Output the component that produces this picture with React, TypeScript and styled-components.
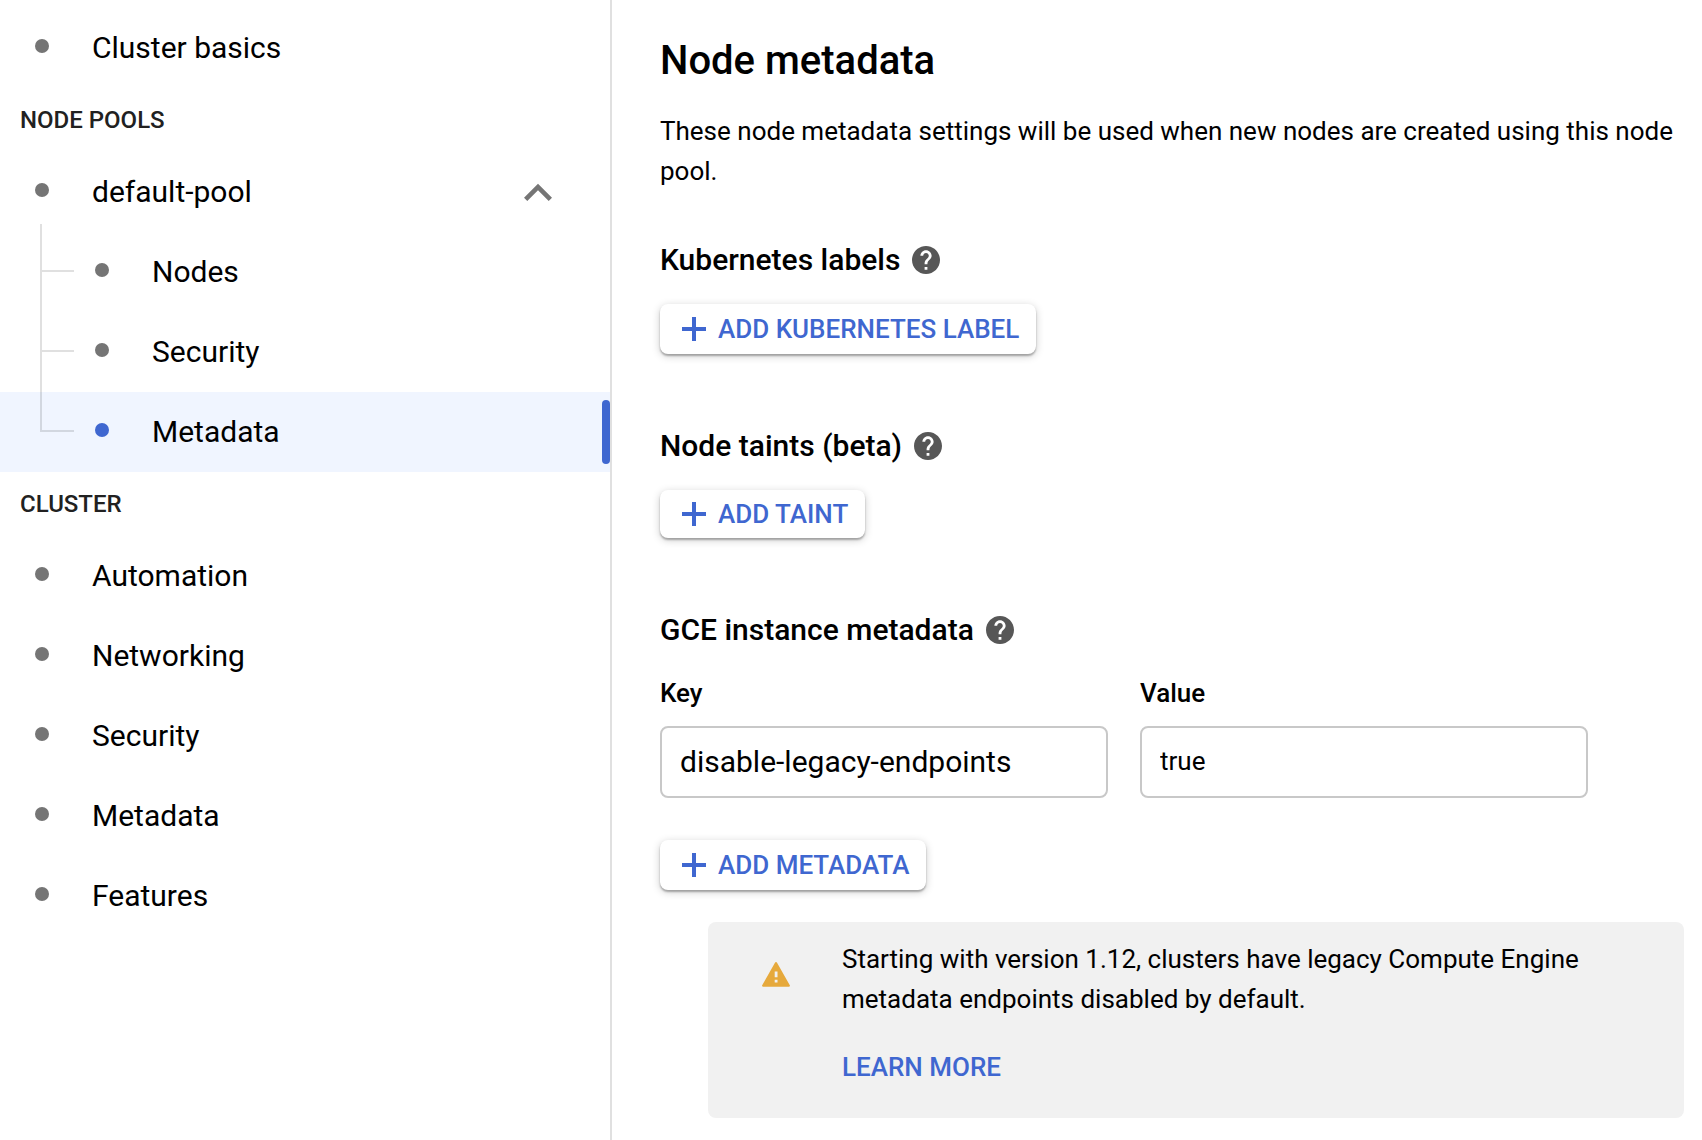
import React from "react";
import styled, { createGlobalStyle } from "styled-components";

const blue = "#3f67d0";

const GlobalStyle = createGlobalStyle`
  *, *::before, *::after { box-sizing: border-box; }
  body {
    margin: 0;
    background: #fff;
    color: #000;
    font-family: Roboto, "Liberation Sans", sans-serif;
    font-size: 26px;
    line-height: 40px;
  }
  h1, h2, h3, p, ul { margin: 0; padding: 0; }
  ul { list-style: none; }
`;

const Page = styled.div`
  display: flex;
  min-height: 100vh;
`;

const Sidebar = styled.nav`
  flex: 0 0 612px;
  padding-top: 8px;
  border-right: 2px solid #e0e0e0;
`;

const GroupTitle = styled.h3`
  padding: 12px 20px;
  color: #212121;
  font-size: 24px;
  font-weight: 500;
`;

const NavLink = styled.a<{ $nested?: boolean; $active?: boolean }>`
  position: relative;
  display: flex;
  align-items: center;
  gap: 43px;
  height: 80px;
  padding: 0 16px 0 ${(p) => (p.$nested ? 95 : 35)}px;
  background: ${(p) => (p.$active ? "#f0f5ff" : "transparent")};
  color: #000;
  font-size: 30px;
  text-decoration: none;

  &::after {
    content: "";
    display: ${(p) => (p.$active ? "block" : "none")};
    position: absolute;
    top: 8px;
    right: 0;
    bottom: 8px;
    width: 8px;
    border-radius: 4px;
    background: ${blue};
  }
`;

const Bullet = styled.span<{ $active?: boolean }>`
  width: 14px;
  height: 14px;
  margin-bottom: 4px;
  border-radius: 50%;
  background: ${(p) => (p.$active ? blue : "#757575")};
`;

const PoolRow = styled.div`
  display: flex;
  align-items: center;

  ${NavLink} { flex: 1; }
`;

const Toggle = styled.button`
  display: flex;
  margin-right: 44px;
  padding: 2px 0 0;
  border: 0;
  background: none;
  color: #757575;
  cursor: pointer;
`;

/* Each branch draws its own piece of the tree line beside the bullet. */
const Branch = styled.li`
  position: relative;

  &::before {
    content: "";
    position: absolute;
    z-index: 1;
    top: -40px;
    left: 40px;
    width: 34px;
    height: 80px;
    border: solid rgba(0, 0, 0, 0.12);
    border-width: 0 0 2px 2px;
  }

  &:first-child::before {
    top: -8px;
    height: 48px;
  }
`;

const Main = styled.main`
  flex: 1;
  min-width: 0;
  padding: 37px 18px 22px 48px;
`;

const Title = styled.h1`
  margin-bottom: 26px;
  font-size: 40px;
  font-weight: 500;
  line-height: 48px;
`;

const Section = styled.section`
  display: flex;
  flex-direction: column;
  align-items: flex-start;
  margin-top: 48px;

  &:first-of-type { margin-top: 49px; }
`;

const SectionTitle = styled.h2`
  display: flex;
  align-items: center;
  gap: 12px;
  font-size: 30px;
  font-weight: 500;
`;

const HelpButton = styled.button`
  display: flex;
  padding: 0;
  border: 0;
  background: none;
  color: #575757;
  cursor: pointer;
`;

const AddButton = styled.button<{ $compact?: boolean }>`
  display: flex;
  align-items: center;
  gap: 12px;
  height: ${(p) => (p.$compact ? 48 : 50)}px;
  margin: 24px 0;
  padding: 0 17px 0 22px;
  border: 0;
  border-radius: 8px;
  background: #fff;
  box-shadow: 0 2px 2px rgba(0, 0, 0, 0.28), 0 2px 8px rgba(0, 0, 0, 0.2);
  color: ${blue};
  font: 500 26px/40px Roboto, "Liberation Sans", sans-serif;
  cursor: pointer;
`;

const Fields = styled.div`
  display: flex;
  gap: 32px;
  width: 100%;
  margin: 23px 0 18px;
`;

const Field = styled.label`
  display: flex;
  flex: 0 1 448px;
  flex-direction: column;
  gap: 13px;
  min-width: 0;
  font-weight: 500;
`;

const TextInput = styled.input<{ $large?: boolean }>`
  width: 100%;
  height: 72px;
  padding: 0 18px 2px;
  border: 2px solid #c8c8c8;
  border-radius: 8px;
  background: #fff;
  color: #000;
  font: 400 ${(p) => (p.$large ? 30 : 26)}px/40px Roboto, "Liberation Sans", sans-serif;
`;

const Notice = styled.aside`
  display: flex;
  align-items: flex-start;
  gap: 52px;
  margin: 8px 0 0 48px;
  padding: 17px 16px 31px 54px;
  border-radius: 8px;
  background: #f1f1f1;

  > svg { flex: none; margin-top: 23px; }
`;

const NoticeBody = styled.div`
  display: flex;
  flex-direction: column;
  align-items: flex-start;
  gap: 28px;
`;

const LearnMore = styled.a`
  color: ${blue};
  font-weight: 500;
  text-decoration: none;
`;

const PlusIcon = () => (
  <svg width="24" height="24" viewBox="0 0 24 24" aria-hidden="true">
    <path d="M10 0h4v10h10v4H14v10h-4V14H0v-4h10z" fill="currentColor" />
  </svg>
);

const HelpIcon = () => (
  <svg width="28" height="28" viewBox="2 2 20 20" aria-hidden="true">
    <path
      fill="currentColor"
      d="M12 2C6.48 2 2 6.48 2 12s4.48 10 10 10 10-4.48 10-10S17.52 2 12 2zm1 17h-2v-2h2v2zm2.07-7.75l-.9.92C13.45 12.9 13 13.5 13 15h-2v-.5c0-1.1.45-2.1 1.17-2.83l1.24-1.26c.37-.36.59-.86.59-1.41 0-1.1-.9-2-2-2s-2 .9-2 2H8c0-2.21 1.79-4 4-4s4 1.79 4 4c0 .88-.36 1.68-.93 2.25z"
    />
  </svg>
);

const ChevronUpIcon = () => (
  <svg width="56" height="56" viewBox="0 0 24 24" aria-hidden="true">
    <path d="M12 8l-6 6 1.41 1.41L12 10.83l4.59 4.58L18 14z" fill="currentColor" />
  </svg>
);

const WarningIcon = () => (
  <svg width="28" height="25" viewBox="0 0 28 25" aria-hidden="true">
    <path
      d="M13.1.6a1 1 0 0 1 1.8 0l12.9 22.6a1 1 0 0 1-.9 1.5H1.1a1 1 0 0 1-.9-1.5z"
      fill="#e6a93c"
    />
    <path d="M12.7 9.5h2.8v5.8h-2.8zM12.7 17.7h2.8v2.7h-2.8z" fill="#f1f1f1" />
  </svg>
);

const NavItem = ({ label, nested, active }: { label: string; nested?: boolean; active?: boolean }) => (
  <NavLink href="#" $nested={nested} $active={active} aria-current={active ? "page" : undefined}>
    <Bullet $active={active} />
    {label}
  </NavLink>
);

const Heading = ({ children }: { children: string }) => (
  <SectionTitle>
    {children}
    <HelpButton type="button" aria-label={`Help: ${children}`}>
      <HelpIcon />
    </HelpButton>
  </SectionTitle>
);

const Add = ({ children, compact }: { children: string; compact?: boolean }) => (
  <AddButton type="button" $compact={compact}>
    <PlusIcon />
    {children}
  </AddButton>
);

const poolPages = ["Nodes", "Security", "Metadata"];
const clusterPages = ["Automation", "Networking", "Security", "Metadata", "Features"];

export default function App() {
  return (
    <>
      <GlobalStyle />
      <Page>
        <Sidebar>
          <NavItem label="Cluster basics" />
          <GroupTitle>NODE POOLS</GroupTitle>
          <PoolRow>
            <NavItem label="default-pool" />
            <Toggle type="button" aria-label="Collapse default-pool" aria-expanded="true">
              <ChevronUpIcon />
            </Toggle>
          </PoolRow>
          <ul>
            {poolPages.map((page) => (
              <Branch key={page}>
                <NavItem label={page} nested active={page === "Metadata"} />
              </Branch>
            ))}
          </ul>
          <GroupTitle>CLUSTER</GroupTitle>
          <ul>
            {clusterPages.map((page) => (
              <li key={page}>
                <NavItem label={page} />
              </li>
            ))}
          </ul>
        </Sidebar>
        <Main>
          <Title>Node metadata</Title>
          <p>These node metadata settings will be used when new nodes are created using this node pool.</p>
          <Section>
            <Heading>Kubernetes labels</Heading>
            <Add>ADD KUBERNETES LABEL</Add>
          </Section>
          <Section>
            <Heading>Node taints (beta)</Heading>
            <Add compact>ADD TAINT</Add>
          </Section>
          <Section>
            <Heading>GCE instance metadata</Heading>
            <Fields>
              <Field>
                Key
                <TextInput $large defaultValue="disable-legacy-endpoints" />
              </Field>
              <Field>
                Value
                <TextInput defaultValue="true" />
              </Field>
            </Fields>
            <Add>ADD METADATA</Add>
          </Section>
          <Notice>
            <WarningIcon />
            <NoticeBody>
              <p>Starting with version 1.12, clusters have legacy Compute Engine metadata endpoints disabled by default.</p>
              <LearnMore href="#">LEARN MORE</LearnMore>
            </NoticeBody>
          </Notice>
        </Main>
      </Page>
    </>
  );
}
